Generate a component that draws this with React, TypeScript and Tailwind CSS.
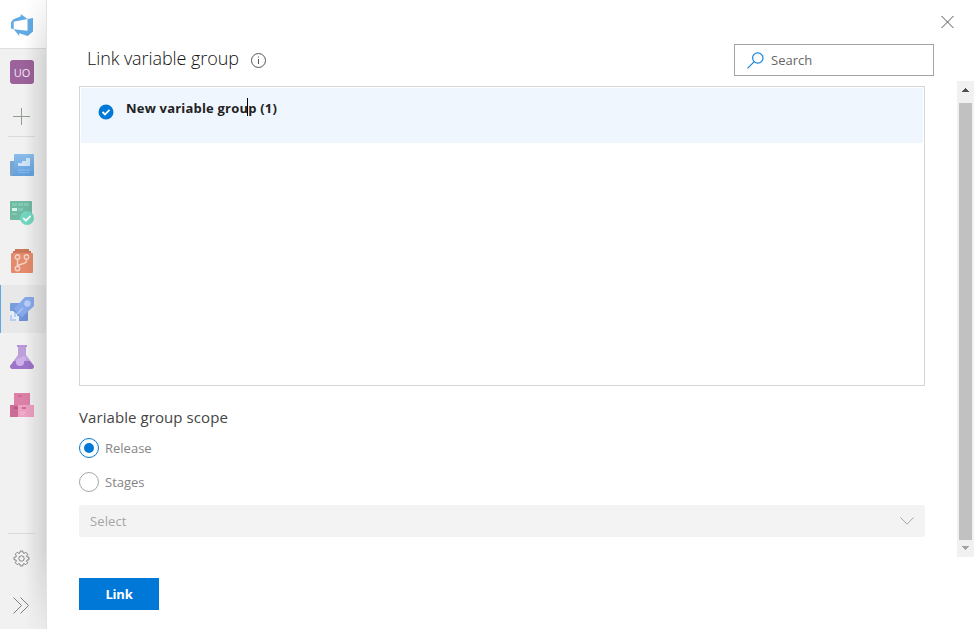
import React from 'react';

function DevOpsLogo() {
  return (
    <svg width="22" height="22" viewBox="0 0 24 24" className="block">
      <path
        d="M0 8.877 2.247 5.91l8.405-3.416V.022l7.37 5.393L2.966 8.338v8.225L0 15.707zm24-4.45v14.651l-5.753 4.9-9.303-3.057v3.056l-5.978-7.416 15.057 1.798V5.415z"
        fill="#62abe4"
      />
    </svg>
  );
}

function BoardsOverview() {
  return (
    <svg width="24" height="24" viewBox="0 0 24 24">
      <defs>
        <linearGradient id="overview" x1="0" y1="0" x2="0" y2="1">
          <stop stopColor="#8bbdec" />
          <stop offset="1" stopColor="#629fdc" />
        </linearGradient>
      </defs>
      <path d="M0 9q0-1 1-1h4v15H1q-1 0-1-1Z" fill="#78a6cf" />
      <path d="M5 1h18q1 0 1 1v20q0 1-1 1H2q2-1 2-3V2q0-1 1-1Z" fill="url(#overview)" />
      <path d="M8 10h4V8h4V5h4v8H8Z" fill="#d0e4f8" />
      <path d="M8 16h7v2H8ZM16 16h4v2h-4ZM8 19h11v1H8Z" fill="#82b3e6" />
    </svg>
  );
}

function Boards() {
  return (
    <svg width="24" height="24" viewBox="0 0 24 24">
      <rect width="22" height="19" rx="1" fill="#70b9a3" />
      <path d="M2 2h5v3H2ZM8 2h5v3H8ZM14 2h5v3h-5ZM8 7h5v3H8ZM2 12h5v2H2Z" fill="#82c9b1" />
      <path d="M2 7h5v3H2Z" fill="#d9f4ec" />
      <circle cx="17" cy="17" r="7" fill="#72d6c0" />
      <path d="m13.2 17 2.7 2.7 4.7-4.8" fill="none" stroke="#fff" strokeWidth="1.7" />
    </svg>
  );
}

function Repos() {
  return (
    <svg width="24" height="26" viewBox="0 0 24 26">
      <path d="M5 1h14v2h2v3H3V3h2Z" fill="#cc775b" />
      <rect x="1" y="5" width="22" height="20" rx="1" fill="#e58b6d" />
      <g fill="none" stroke="#f5d3c6" strokeWidth="1.4">
        <circle cx="7.5" cy="9" r="2.2" />
        <circle cx="16.5" cy="9" r="2.2" />
        <circle cx="7.5" cy="20.5" r="2.2" />
        <path d="M7.5 11.2v7M16.5 11.2v1.3q0 2-2 2.6l-7 2.4" />
      </g>
    </svg>
  );
}

function Pipelines() {
  return (
    <svg width="24" height="24" viewBox="0 0 24 24">
      <path d="M1 6h9L3 14 0 15V7q0-1 1-1Z" fill="#789ed9" />
      <path d="M18 14v9q0 1-1 1H9v-3Z" fill="#6f90d4" />
      <path d="M15 0h8q1 0 1 1v8L10 22l-8-8Z" fill="#87a9e9" />
      <path d="m4 12 8 8-2 3-9-9Z" fill="#749ade" />
      <circle cx="17.5" cy="6.5" r="3.2" fill="#b9d0f8" />
      <path d="m7 17 6-6" stroke="#a9c4f2" strokeWidth="1.7" />
      <path d="M0 14h3l2 2v1h2v2h2v5H0Z" fill="#e8edf5" />
      <path d="M0 18h2v4h4v2H0ZM4 16h2v4H4Z" fill="#b5cdf1" />
    </svg>
  );
}

function TestPlans() {
  return (
    <svg width="24" height="24" viewBox="0 0 24 24">
      <path d="M8 2h8v8l8 11q0 3-3 3H3q-3 0-3-3L8 10Z" fill="#bda0da" />
      <path d="m4 16 16 0 4 5q0 3-3 3H3q-3 0-3-3Z" fill="#9c75c8" />
      <rect x="7" width="10" height="2" fill="#b696d8" />
      <circle cx="10" cy="17" r="4.1" fill="#d0b0ea" />
      <circle cx="13.7" cy="13.6" r="2.7" fill="#ceb0e8" />
    </svg>
  );
}

function Artifacts() {
  return (
    <svg width="24" height="24" viewBox="0 0 24 24">
      <rect x="4" width="16" height="12" fill="#dc80a8" />
      <rect y="12" width="8" height="12" fill="#ca6c96" />
      <rect x="8" y="12" width="16" height="12" fill="#eda0c1" />
      <path d="M8 2h4v2H8ZM12 14h4v2h-4Z" fill="#ce6c98" />
      <path d="M4 14h4v2H4Z" fill="#b65780" />
      <path d="M10 19.5h6M10 21.5h4" stroke="#f3b7d0" />
    </svg>
  );
}

function Gear() {
  return (
    <svg width="17" height="17" viewBox="0 0 17 17" fill="none" stroke="#828282" strokeWidth="1">
      <circle cx="8.5" cy="8.5" r="2.7" />
      <path d="M7.3 1h2.4l.4 2 1 .4 1.7-1.1 1.9 1.9-1.1 1.7.4 1 2 .4v2.4l-2 .4-.4 1 1.1 1.7-1.9 1.9-1.7-1.1-1 .4-.4 2H7.3l-.4-2-1-.4-1.7 1.1-1.9-1.9 1.1-1.7-.4-1-2-.4V7.3l2-.4.4-1-1.1-1.7 1.9-1.9 1.7 1.1 1-.4Z" />
    </svg>
  );
}

function NavItem({ children, active = false }: { children: React.ReactNode; active?: boolean }) {
  return (
    <div className={active ? 'flex h-12 items-center border-l border-[#5aa9e6] bg-[#e8e8e8] pl-[9px]' : 'flex h-12 items-center pl-[10px]'}>
      {children}
    </div>
  );
}

function Sidebar() {
  return (
    <aside className="relative flex h-full w-[47px] shrink-0 flex-col border-r border-[#e3e3e3] bg-[#f1f1f1]">
      <div className="flex h-[49px] items-center border-b border-[#dedede] bg-white pl-[11px] pt-px"><DevOpsLogo /></div>
      <div className="flex h-[46px] items-center pl-[10px]">
        <div className="flex h-6 w-6 items-center justify-center rounded-[3px] bg-[#9c629b] text-[11px] leading-none text-[#f3e8f3]">UO</div>
      </div>
      <div className="flex h-[41px] items-center pl-[13px] pt-px">
        <svg width="17" height="17" viewBox="0 0 17 17"><path d="M8.5 0v17M0 8.5h17" stroke="#939c93" /></svg>
      </div>
      <div className="ml-2 w-[27px] border-t border-[#dcdcdc]" />
      <nav className="pt-1">
        <NavItem><BoardsOverview /></NavItem>
        <NavItem><Boards /></NavItem>
        <NavItem><Repos /></NavItem>
        <NavItem active><Pipelines /></NavItem>
        <NavItem><TestPlans /></NavItem>
        <NavItem><Artifacts /></NavItem>
      </nav>
      <div className="mt-auto">
        <div className="ml-2 w-[27px] border-t border-[#dcdcdc]" />
        <div className="flex h-12 items-center pl-[13px]"><Gear /></div>
        <div className="flex h-[47px] items-center pl-[13px]">
          <svg width="17" height="17" viewBox="0 0 17 17" fill="none" stroke="#808080"><path d="m.5.5 8 8-8 8M7.5.5l8 8-8 8" /></svg>
        </div>
      </div>
      <div className="absolute inset-y-0 right-0 w-[22px] bg-gradient-to-r from-transparent to-black/12 [mask-image:linear-gradient(to_bottom,rgba(0,0,0,0.2),black_60px,black_550px,rgba(0,0,0,0.25))]" />
    </aside>
  );
}

function Radio({ label, checked = false }: { label: string; checked?: boolean }) {
  return (
    <label className="flex h-5 items-center gap-[6px]">
      <span className={checked ? 'flex size-5 items-center justify-center rounded-full border border-[#0078d7]' : 'size-5 rounded-full border border-[#a6a6a6]'}>
        {checked && <span className="size-[10px] rounded-full bg-[#0078d7]" />}
      </span>
      <span className="text-[13px] leading-5 text-[#858585]">{label}</span>
    </label>
  );
}

function Scrollbar() {
  return (
    <div className="mt-[37px] flex h-[476px] w-[17px] flex-col items-center bg-[#f1f1f1]">
      <div className="flex h-[22px] w-full items-start justify-center pt-[7px]">
        <svg width="7" height="4" viewBox="0 0 7 4" shapeRendering="crispEdges"><path d="M3 0h1v1h1v1h1v1h1v1H0V3h1V2h1V1h1Z" fill="#505050" /></svg>
      </div>
      <div className="h-[437px] w-[13px] bg-[#c1c1c1]" />
      <svg className="mt-[6px]" width="7" height="4" viewBox="0 0 7 4" shapeRendering="crispEdges"><path d="M0 0h7v1H6v1H5v1H4v1H3V3H2V2H1V1H0Z" fill="#a3a3a3" /></svg>
    </div>
  );
}

export default function App() {
  return (
    <div className="flex h-[629px] w-[975px] overflow-hidden bg-white font-['Open_Sans','Noto_Sans',sans-serif]">
      <Sidebar />
      <main className="w-[910px] pl-8">
        <header className="flex h-[86px] w-[855px] items-start justify-between pt-11">
          <div className="flex h-7 items-center pl-2">
            <h1 className="w-[163px] whitespace-nowrap text-[18px] font-light leading-7 tracking-[-0.08px] text-[#111]">Link variable group</h1>
            <svg className="mt-[3px]" width="16" height="16" viewBox="0 0 16 16" fill="none" stroke="#555">
              <circle cx="8.5" cy="8.5" r="7" /><path d="M8.5 7v5M8.5 4.5v1" />
            </svg>
          </div>
          <div className="flex h-8 w-[200px] items-center border border-[#a3a3a3] pl-3">
            <svg width="17" height="17" viewBox="0 0 17 17" fill="none" stroke="#1684dc" strokeWidth="1.2"><circle cx="10.8" cy="6" r="5.2" /><path d="M7 9.8.5 16.3" /></svg>
            <span className="ml-[7px] text-[13px] leading-5 text-[#666]">Search</span>
          </div>
        </header>
        <section className="h-[300px] w-[846px] border border-[#d6d6d6] p-px">
          <div className="flex h-[55px] bg-[#eff6fd] pl-[17px]">
            <svg className="mt-4" width="16" height="16" viewBox="0 0 16 16"><circle cx="8" cy="8" r="7.5" fill="#0078d7" /><path d="m4.5 8 2.5 2.4 4.5-4.5" fill="none" stroke="#fff" strokeWidth="1.8" /></svg>
            <div className="relative ml-3 mt-[10px] h-5 whitespace-nowrap text-[13px] font-bold leading-5 tracking-[0.2px] text-[#222]">
              New variable group (1)
              <span className="absolute left-[121px] top-0 h-[18px] w-px bg-black" />
            </div>
          </div>
        </section>
        <section className="w-[846px] pt-[19px]">
          <h2 className="h-6 text-[15px] font-normal leading-6 tracking-[0.08px] text-[#444]">Variable group scope</h2>
          <div className="mt-[9px] flex flex-col gap-[14px]"><Radio label="Release" checked /><Radio label="Stages" /></div>
          <div className="mt-[13px] flex h-8 items-center justify-between rounded-[2px] bg-[#f3f3f3] pl-[11px] pr-[11px]">
            <span className="text-[13px] leading-5 tracking-[0.1px] text-[#a6a6a6]">Select</span>
            <svg width="14" height="8" viewBox="0 0 14 8" fill="none" stroke="#a6a6a6"><path d="m.5.5 6.5 6.7L13.5.5" /></svg>
          </div>
          <button className="mt-[41px] block h-8 w-20 bg-[#0078d7] text-[13px] font-bold leading-8 tracking-[-0.2px] text-white">Link</button>
        </section>
      </main>
      <aside className="flex w-[18px] flex-col pt-[15px]">
        <svg className="-ml-4 h-[14px] w-[13px] shrink-0" viewBox="0 0 13 14" fill="none" stroke="#555"><path d="m.5 1 12 12m0-12-12 12" /></svg>
        <div className="mt-[15px]"><Scrollbar /></div>
      </aside>
    </div>
  );
}
